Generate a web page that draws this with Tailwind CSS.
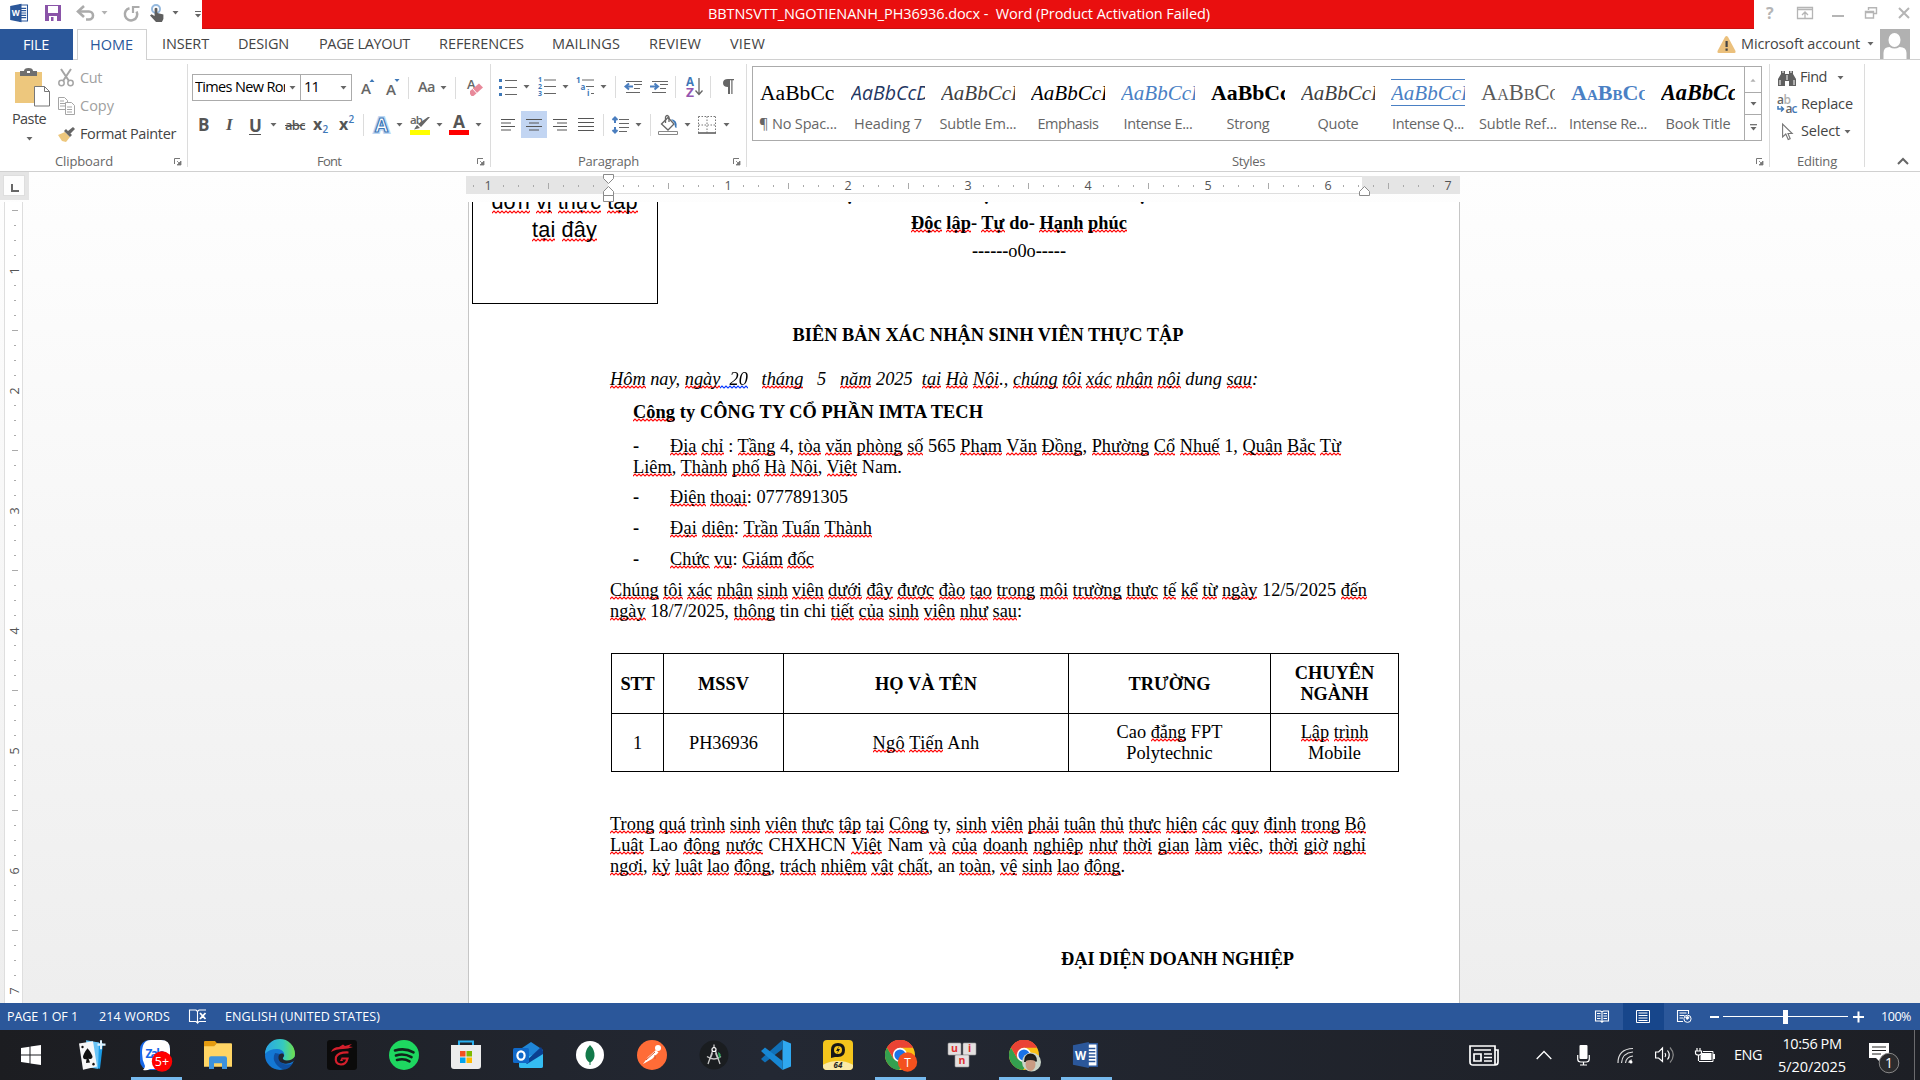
<!DOCTYPE html>
<html lang="en">
<head>
<meta charset="utf-8">
<title>BBTNSVTT_NGOTIENANH_PH36936.docx - Word</title>
<script src="https://cdn.jsdelivr.net/npm/@tailwindcss/browser@4"></script>
</head>
<body class="w-[1920px] h-[1080px] overflow-hidden bg-white flex flex-col font-['Open_Sans','Noto_Sans',sans-serif] text-[14.5px] leading-none text-[#444] [&_svg]:shrink-0 [&_svg]:block [&_svg]:overflow-visible [&_[data-w]]:whitespace-pre [&_[data-w]]:shrink-0">

<svg class="absolute w-0 h-0" aria-hidden="true">
  <defs>
    <symbol id="arr" viewBox="0 0 7 4"><path d="M.5 0h6L3.5 3.4z" fill="#666"/></symbol>
    <symbol id="launch" viewBox="0 0 8 8"><path d="M.5 6V.5H6" fill="none" stroke="#777"/><path d="M3 3l3 3M7 3v4H3z" fill="#777" stroke="#777" stroke-width=".8"/></symbol>
    <symbol id="word" viewBox="0 0 30 30"><path d="M15 3h12v24H15z" fill="#fff" stroke="#2b579a" stroke-width="1.6"/><path d="M17 8h8M17 11.500h8M17 15h8M17 18.500h8M17 22h8" stroke="#2b579a" stroke-width="1.7"/><path d="M1 4.500L18 1v28L1 25.500z" fill="#2b579a"/><text x="9.300" y="20" text-anchor="middle" font-size="14" font-weight="700" fill="#fff" font-family="Open Sans, sans-serif" textLength="12" lengthAdjust="spacingAndGlyphs">W</text></symbol>
    <symbol id="chrome" viewBox="0 0 30 30"><circle cx="15" cy="15" r="15" fill="#fbc116"/><path d="M15 15L2 7.500A15 15 0 0 1 28 7.500H15z" fill="#ea4335"/><path d="M2 7.500A15 15 0 0 0 14 30L21.500 18.800L15 15L8.500 18.800z" fill="#34a04f"/><path d="M15 7.500h13A15 15 0 0 0 2 7.500L8.500 18.800L15 15z" fill="#ea4335"/><circle cx="15" cy="15" r="7.200" fill="#fff"/><circle cx="15" cy="15" r="5.600" fill="#1a73e8"/></symbol>
  </defs>
</svg>

<!-- Title bar -->
<header class="h-[29px] flex items-start shrink-0">
  <div class="w-[202px] h-[26px] flex items-center">
    <svg class="ml-[9px]" width="21" height="20" viewBox="0 0 30 30"><use href="#word"/></svg>
    <svg class="ml-[15px]" width="16" height="16" viewBox="0 0 16 16"><path d="M0 0h16v16H0z" fill="#8a54a8"/><path d="M3 1h10v7H3zM4 11h8v5H4z" fill="#fff"/><path d="M6 12h2.500v4H6z" fill="#8a54a8"/></svg>
    <svg class="ml-[16px]" width="18" height="15" viewBox="0 0 18 15"><path d="M2 5.500h10a4 4 0 0 1 0 8H9" fill="none" stroke="#ababab" stroke-width="2.600"/><path d="M7 0L1 5.500L7 11" fill="none" stroke="#ababab" stroke-width="2.600"/></svg>
    <svg class="ml-[6px] opacity-50" width="7" height="4"><use href="#arr"/></svg>
    <svg class="ml-[15px]" width="17" height="17" viewBox="0 0 17 17"><path d="M6.500 3.200A6.200 6.200 0 1 0 13.600 6.500" fill="none" stroke="#ababab" stroke-width="2.500"/><path d="M10 8V2H16.500" fill="none" stroke="#ababab" stroke-width="2.200"/></svg>
    <svg class="ml-[10px]" width="15" height="18" viewBox="0 0 15 18"><circle cx="6" cy="5" r="4" fill="none" stroke="#94b8dd" stroke-width="2"/><path d="M4.600 4.500q1.400-1.500 2.800 0V9l6 1.500V15l-1.500 3H6L0 11.500l1.500-1.200L4.600 12z" fill="#5f5f5f"/></svg>
    <svg class="ml-[7px]" width="7" height="4"><use href="#arr"/></svg>
    <svg class="ml-[16px] mt-[2px]" width="6" height="7" viewBox="0 0 6 7"><path d="M0 .5h6" stroke="#666"/><path d="M0 3h6L3 6.500z" fill="#666"/></svg>
  </div>
  <div class="w-[1552px] h-[29px] bg-[#e90f0f] border-b border-[#c91212] flex items-center justify-center pr-[38px] pt-px text-white"><span data-w="502">BBTNSVTT_NGOTIENANH_PH36936.docx -  Word (Product Activation Failed)</span></div>
  <div class="flex-1 h-[26px] flex items-center">
    <span class="ml-[12px] w-[9px] text-[16px] font-bold text-[#b5b5b5]">?</span>
    <svg class="ml-[22px]" width="16" height="12" viewBox="0 0 16 12"><path d="M.5.500h15v11H.5zM.5 2.500h15M8 11V5M5 8l3-3l3 3" fill="none" stroke="#b5b5b5" stroke-width="1.300"/></svg>
    <svg class="ml-[19px]" width="12" height="12"><path d="M0 8h12v2H0z" fill="#b5b5b5"/></svg>
    <svg class="ml-[21px]" width="12" height="12" viewBox="0 0 12 12"><path d="M3.500 3V.8h8v5.700H9M.5 4.500h8v6.500h-8zM.5 5.500h8" fill="none" stroke="#b5b5b5" stroke-width="1.400"/></svg>
    <svg class="ml-[21px]" width="12" height="12" viewBox="0 0 12 12"><path d="M1 1l10 10M11 1L1 11" stroke="#b5b5b5" stroke-width="2"/></svg>
  </div>
</header>

<!-- Ribbon tabs -->
<nav class="h-[31px] flex items-stretch shrink-0 border-b border-[#d0d0d0] text-[14.500px] [&>span]:self-center [&>span]:pt-px">
  <div class="w-[73px] h-[31px] bg-[#2a579a] text-white flex items-center justify-center pt-px pr-[1px]"><span data-w="26">FILE</span></div>
  <div class="ml-[4px] w-[70px] h-[31px] bg-white border border-b-0 border-[#d0d0d0] text-[#2a579a] flex items-center justify-center pr-[1px]"><span data-w="43">HOME</span></div>
  <span class="ml-[15px]" data-w="47">INSERT</span>
  <span class="ml-[29px]" data-w="51">DESIGN</span>
  <span class="ml-[30px]" data-w="91">PAGE LAYOUT</span>
  <span class="ml-[29px]" data-w="85">REFERENCES</span>
  <span class="ml-[28px]" data-w="68">MAILINGS</span>
  <span class="ml-[29px]" data-w="52">REVIEW</span>
  <span class="ml-[29px]" data-w="35">VIEW</span>
  <div class="ml-auto mr-[10px] flex items-center">
    <svg width="19" height="17" viewBox="0 0 19 17"><path d="M8 1q1.500-2 3 0l7.500 14q.5 2-1 2h-16q-1.500 0-1-2z" fill="#ebc07c"/><path d="M8.500 5h2.200v6H8.500zM8.500 12.500h2.200v2.200H8.500z" fill="#444"/></svg>
    <span class="ml-[5px]" data-w="119">Microsoft account</span>
    <svg class="ml-[7px]" width="7" height="4"><use href="#arr"/></svg>
    <svg class="ml-[6px]" width="30" height="30" viewBox="0 0 30 30"><path d="M0 0h30v30H0z" fill="#b1b1b1"/><ellipse cx="14.500" cy="11" rx="6" ry="7" fill="#fff"/><path d="M3.500 30v-6q0-6 6-6q5 3 10 0q7 0 7 6v6z" fill="#fff"/></svg>
  </div>
</nav>

<!-- Ribbon -->
<section class="h-[112px] flex shrink-0 border-b border-[#d0d0d0] text-[14.500px]">

  <!-- Clipboard -->
  <div class="w-[187px] flex flex-col">
    <div class="flex h-[93px]">
      <div class="w-[58px] flex flex-col items-center pt-[8px]">
        <svg class="ml-[6px]" width="35" height="39" viewBox="0 0 35 39"><path d="M0 4h27v31H0z" fill="#edc77d"/><path d="M5 8V3h4q0-3 4.500-3T18 3h4v5z" fill="#6f6f6f"/><path d="M12 3h3v2h-3z" fill="#fff"/><path d="M19.500 18.500h10l5 5V38h-15z" fill="#fff" stroke="#777" /><path d="M29.500 18.500v5h5" fill="none" stroke="#777"/></svg>
        <span class="mt-[5px]" data-w="34">Paste</span>
        <svg class="mt-[10px]" width="7" height="4"><use href="#arr"/></svg>
      </div>
      <div class="pt-[4px] flex flex-col [&>div]:h-[28px] [&>div]:flex [&>div]:items-center [&>div]:gap-[5px]">
        <div class="text-[#a0a0a0]"><svg width="17" height="18" viewBox="0 0 17 18"><g fill="none" stroke="#a5a5a5" stroke-width="1.500"><circle cx="3.500" cy="14" r="2.700"/><circle cx="12.500" cy="14" r="2.700"/><path d="M5 12L13 0M11 12L3 0" stroke-width="2"/></g></svg><span data-w="22">Cut</span></div>
        <div class="text-[#a0a0a0]"><svg width="17" height="18" viewBox="0 0 17 18"><g fill="#fff" stroke="#a5a5a5"><path d="M.5.500h6l3 3v9h-9zM2 4h4M2 6.500h5M2 9h5"/><path d="M7.500 5.500h6l3 3v9h-9zM9 10h5M9 12.500h5M9 15h5"/></g></svg><span data-w="34">Copy</span></div>
        <div class="text-[#444]"><svg width="17" height="15" viewBox="0 0 17 15"><path d="M0 8l7-3l5 5l-4 5l-4-1z" fill="#edc77d"/><path d="M6 4l2-2l6 6l-2 2zM10 4l5-4l2 2l-5 5z" fill="#666"/></svg><span data-w="96">Format Painter</span></div>
      </div>
    </div>
    <div class="flex h-[17px] items-center pl-[55px] text-[13px] text-[#666]"><span data-w="58">Clipboard</span><svg class="ml-auto mr-[5px]" width="8" height="8"><use href="#launch"/></svg></div>
  </div>
  <div class="w-px h-[103px] mt-[4px] bg-[#dcdcdc]"></div>

  <!-- Font -->
  <div class="w-[302px] flex flex-col">
    <div class="flex items-center mt-[14px] ml-[4px] h-[27px]">
      <div class="w-[109px] h-[27px] border border-[#ababab] flex items-center pl-[2px] text-black"><div class="w-[90px] overflow-hidden py-1"><span data-w="96" class="inline-block">Times New Ron</span></div><svg class="ml-[4px]" width="7" height="4"><use href="#arr"/></svg></div>
      <div class="-ml-px w-[52px] h-[27px] border border-[#ababab] flex items-center pl-[3px] text-black"><span data-w="15">11</span><svg class="ml-auto mr-[4px]" width="7" height="4"><use href="#arr"/></svg></div>
      <svg class="ml-[9px]" width="14" height="18" viewBox="0 0 14 18"><text x="0" y="15" font-size="15" font-weight="600" fill="#666" textLength="10" lengthAdjust="spacingAndGlyphs">A</text><path d="M8.500 3L11 0l2.500 3z" fill="#3e78b8"/></svg>
      <svg class="ml-[11px]" width="14" height="18" viewBox="0 0 14 18"><text x="0" y="16" font-size="14" font-weight="600" fill="#666" textLength="10" lengthAdjust="spacingAndGlyphs">A</text><path d="M8.500 0L11 3l2.500-3z" fill="#3e78b8"/></svg>
      <div class="ml-[8px] w-px h-[22px] bg-[#dcdcdc]"></div>
      <span class="ml-[9px] font-semibold text-[#666]" data-w="17">Aa</span>
      <svg class="ml-[5px]" width="7" height="4"><use href="#arr"/></svg>
      <div class="ml-[8px] w-px h-[22px] bg-[#dcdcdc]"></div>
      <svg class="ml-[11px]" width="16" height="19" viewBox="0 0 16 19"><text x="0" y="10.500" font-size="13" font-weight="600" fill="#666" textLength="9">A</text><path d="M3 13l9-7.500l4 4L6.500 18h-2L3 16z" fill="#e8899a"/><path d="M5.500 10.500l4.500 5" stroke="#fff"/></svg>
    </div>
    <div class="flex items-center mt-[10px] ml-[10px] h-[27px] text-[#555] text-[17px] [&>span]:leading-[20px]">
      <span class="font-bold" data-w="10">B</span>
      <span class="ml-[18px] w-[10px] font-bold italic font-['Liberation_Serif',serif]">I</span>
      <span class="ml-[13px] font-bold border-b border-[#555] !leading-[17px] mt-[2px]" data-w="12">U</span>
      <svg class="ml-[9px]" width="7" height="4"><use href="#arr"/></svg>
      <span class="ml-[8px] line-through text-[13px] font-semibold" data-w="20">abc</span>
      <svg class="ml-[8px]" width="16" height="20" viewBox="0 0 16 20"><text y="15" font-size="16" font-weight="700" fill="#555">x</text><text x="9.500" y="18" font-size="10" font-weight="600" fill="#3e78b8">2</text></svg>
      <svg class="ml-[10px]" width="16" height="20" viewBox="0 0 16 20"><text y="15" font-size="16" font-weight="700" fill="#555">x</text><text x="9.500" y="8" font-size="10" font-weight="600" fill="#3e78b8">2</text></svg>
      <div class="ml-[8px] w-px h-[22px] bg-[#dcdcdc]"></div>
      <svg class="ml-[9px]" width="18" height="20" viewBox="0 0 18 20"><text x="2" y="17" font-size="19" font-weight="700" fill="#fff" stroke="#bcd6f2" stroke-width="4" textLength="13" lengthAdjust="spacingAndGlyphs">A</text><text x="2" y="17" font-size="19" font-weight="700" fill="#fff" stroke="#3e78b8" stroke-width="1.200" textLength="13" lengthAdjust="spacingAndGlyphs">A</text></svg>
      <svg class="ml-[5px]" width="7" height="4"><use href="#arr"/></svg>
      <svg class="ml-[7px]" width="20" height="20" viewBox="0 0 20 20"><path d="M0 15h20v5H0z" fill="#ff0"/><text y="8.500" font-size="11.500" font-weight="600" fill="#666" textLength="13">ab</text><path d="M18 2l2 0L11 12l-3-3zM7 10l3 3l-6 1.500z" fill="#666"/></svg>
      <svg class="ml-[6px]" width="7" height="4"><use href="#arr"/></svg>
      <svg class="ml-[6px]" width="20" height="20" viewBox="0 0 20 20"><path d="M0 15h20v5H0z" fill="#f00"/><text x="4" y="13" font-size="17" font-weight="700" fill="#555" textLength="12" lengthAdjust="spacingAndGlyphs">A</text></svg>
      <svg class="ml-[6px]" width="7" height="4"><use href="#arr"/></svg>
    </div>
    <div class="mt-[15px] flex h-[17px] items-center pl-[129px] text-[13px] text-[#666]"><span data-w="24">Font</span><svg class="ml-auto mr-[5px]" width="8" height="8"><use href="#launch"/></svg></div>
  </div>
  <div class="w-px h-[103px] mt-[4px] bg-[#dcdcdc]"></div>

  <!-- Paragraph -->
  <div class="w-[255px] flex flex-col">
    <div class="flex items-center mt-[13px] ml-[8px] h-[27px]">
      <svg width="18" height="18" viewBox="0 0 18 18"><path d="M6 2.500h12M6 9.500h12M6 16.500h12" stroke="#666" /><path d="M0 1h3v3H0zM0 8h3v3H0zM0 15h3v3H0z" fill="#3e78b8"/></svg>
      <svg class="ml-[6px]" width="7" height="4"><use href="#arr"/></svg>
      <svg class="ml-[8px]" width="18" height="19" viewBox="0 0 18 19"><path d="M6 3h12M6 9.500h12M6 16.500h12" stroke="#666"/><g font-size="7" font-weight="700" fill="#3e78b8"><text y="5">1</text><text y="12">2</text><text y="19">3</text></g></svg>
      <svg class="ml-[6px]" width="7" height="4"><use href="#arr"/></svg>
      <svg class="ml-[7px]" width="19" height="19" viewBox="0 0 19 19"><path d="M6 3h12M10 9.500h8M15 16.500h3" stroke="#666"/><g font-size="8" font-weight="700" fill="#3e78b8"><text y="5.500">1</text><text x="4.500" y="12.500">a</text><text x="11" y="19">i</text></g></svg>
      <svg class="ml-[5px]" width="7" height="4"><use href="#arr"/></svg>
      <div class="ml-[8px] w-px h-[22px] bg-[#dcdcdc]"></div>
      <svg class="ml-[8px]" width="18" height="12" viewBox="0 0 18 12"><path d="M2 .5h16M10 3.500h8M10 7.500h6M2 11.500h14" stroke="#666"/><path d="M9 5.500H2M5 2.500L1.500 5.500L5 8.500" fill="none" stroke="#4a7ebf" stroke-width="2"/></svg>
      <svg class="ml-[8px]" width="18" height="12" viewBox="0 0 18 12"><path d="M2 .5h16M10 3.500h8M10 7.500h6M2 11.500h14" stroke="#666"/><path d="M0 5.500h7M4.500 2.500L8 5.500L4.500 8.500" fill="none" stroke="#4a7ebf" stroke-width="2"/></svg>
      <div class="ml-[7px] w-px h-[22px] bg-[#dcdcdc]"></div>
      <svg class="ml-[10px]" width="17" height="20" viewBox="0 0 17 20"><text y="9" font-size="12" font-weight="700" fill="#3e78b8" textLength="8" lengthAdjust="spacingAndGlyphs">A</text><text y="19.500" font-size="12" font-weight="700" fill="#9456b0" textLength="8" lengthAdjust="spacingAndGlyphs">Z</text><path d="M13 1v16M9.500 13.500L13 17.500l3.500-4" fill="none" stroke="#666" stroke-width="1.300"/></svg>
      <div class="ml-[7px] w-px h-[22px] bg-[#dcdcdc]"></div>
      <svg class="ml-[12px]" width="11" height="15" viewBox="0 0 11 15"><path d="M6 0v15H5V8Q0 8 0 4T5 0h6v1.200H9.500V15H8.300V1.200H7V15H6z" fill="#666"/></svg>
    </div>
    <div class="flex items-center mt-[11px] ml-[10px] h-[27px]">
      <svg width="14" height="12" viewBox="0 0 14 12"><path d="M0 .5h14M0 4h10M0 7.500h14M0 11h10" stroke="#555"/></svg>
      <div class="ml-[6px] w-[26px] h-[27px] bg-[#c2d5f2] flex items-center justify-center"><svg width="16" height="12" viewBox="0 0 16 12"><path d="M0 .5h16M3 4h10M0 7.500h16M3 11h10" stroke="#555"/></svg></div>
      <svg class="ml-[6px]" width="14" height="12" viewBox="0 0 14 12"><path d="M0 .5h14M4 4h10M0 7.500h14M4 11h10" stroke="#555"/></svg>
      <svg class="ml-[11px]" width="16" height="13" viewBox="0 0 16 13"><path d="M0 .5h16M0 4.500h16M0 8.500h16M0 12.500h16" stroke="#555"/></svg>
      <div class="ml-[9px] w-px h-[22px] bg-[#dcdcdc]"></div>
      <svg class="ml-[8px]" width="17" height="18" viewBox="0 0 17 18"><path d="M7 3.500h10M7 7.500h10M7 11.500h10M7 15.500h8" stroke="#666"/><path d="M3 2v5M3 11v5M.5 4L3 1.500L5.500 4M.5 14L3 16.500L5.500 14" fill="none" stroke="#4a7ebf" stroke-width="2"/></svg>
      <svg class="ml-[6px]" width="7" height="4"><use href="#arr"/></svg>
      <div class="ml-[8px] w-px h-[22px] bg-[#dcdcdc]"></div>
      <svg class="ml-[7px]" width="20" height="20" viewBox="0 0 20 20"><path d="M.5 16.500h19v3H.5z" fill="#fff" stroke="#888"/><path d="M3.500 9L10 2.500L16 9l-6 6z" fill="#fff" stroke="#666" stroke-width="1.300"/><path d="M7.500 8V2q1.500-3 3.500 0v5" fill="none" stroke="#666" stroke-width="1.300"/><path d="M13 4q7 1 5.500 9q-2 0-2-5z" fill="#3e78b8"/></svg>
      <svg class="ml-[6px]" width="7" height="4"><use href="#arr"/></svg>
      <svg class="ml-[7px]" width="18" height="18" viewBox="0 0 18 18"><path d="M.5.500h17M.5 9h17M.5.500v16M9 .5v16M17.500.500v16" stroke="#777" stroke-dasharray="1.500 1.500"/><path d="M0 17h18" stroke="#555" stroke-width="1.500"/></svg>
      <svg class="ml-[7px]" width="7" height="4"><use href="#arr"/></svg>
    </div>
    <div class="mt-[15px] flex h-[17px] items-center pl-[87px] text-[13px] text-[#666]"><span data-w="61">Paragraph</span><svg class="ml-auto mr-[5px]" width="8" height="8"><use href="#launch"/></svg></div>
  </div>
  <div class="w-px h-[103px] mt-[4px] bg-[#dcdcdc]"></div>

  <!-- Styles gallery -->
  <div class="w-[1022px] flex flex-col">
    <div class="mt-[6px] ml-[5px] w-[1010px] h-[75px] border border-[#ababab] flex">
      <div class="w-[991px] flex text-[#666] [&>div]:w-[90px] [&>div]:flex [&>div]:flex-col [&>div]:items-center [&>div>p]:w-[74px] [&>div>p]:h-[27px] [&>div>p]:mt-[12px] [&>div>p]:mb-[11px] [&>div>p]:overflow-hidden [&>div>p]:whitespace-nowrap [&>div>p]:text-[21px] [&>div>p]:leading-[28px] [&>div>p]:font-['Liberation_Serif',serif]">
        <div><p class="text-black !text-[21.600px] -translate-x-px">AaBbCc</p><span data-w="78">¶ No Spac...</span></div>
        <div><p class="italic text-[#1f3763] !text-[19.500px] !font-['Open_Sans',sans-serif]">AaBbCcD</p><span data-w="68">Heading 7</span></div>
        <div><p class="italic text-[#404040]">AaBbCcDd</p><span data-w="77">Subtle Em...</span></div>
        <div><p class="italic text-black">AaBbCcDd</p><span data-w="61">Emphasis</span></div>
        <div><p class="italic text-[#4a80c4]">AaBbCcDd</p><span data-w="69">Intense E...</span></div>
        <div><p class="font-bold text-black !text-[21.800px]">AaBbCc</p><span data-w="43">Strong</span></div>
        <div><p class="italic text-[#404040]">AaBbCcDd</p><span data-w="41">Quote</span></div>
        <div><p class="italic text-[#4a80c4] border-y border-[#4a80c4] !leading-[26px]">AaBbCcDd</p><span data-w="72">Intense Q...</span></div>
        <div><p class="[font-variant:small-caps] text-[#5a5a5a] !text-[22.500px]">AaBbCcDd</p><span data-w="78">Subtle Ref...</span></div>
        <div><p class="[font-variant:small-caps] font-bold text-[#4a80c4] !text-[22px]">AaBbCcDd</p><span data-w="78">Intense Re...</span></div>
        <div><p class="italic font-bold text-black !text-[22.300px]">AaBbCcDd</p><span data-w="65">Book Title</span></div>
      </div>
      <div class="flex-1 border-l border-[#ababab] flex flex-col [&>div]:flex [&>div]:items-center [&>div]:justify-center">
        <div class="h-[25px]"><svg class="rotate-180 opacity-50" width="6" height="4"><use href="#arr"/></svg></div>
        <div class="h-[23px] border-y border-[#ababab]"><svg width="7" height="4"><use href="#arr"/></svg></div>
        <div class="h-[25px]"><svg width="7" height="7" viewBox="0 0 7 7"><path d="M0 .7h7" stroke="#666" stroke-width="1.200"/><path d="M.5 3h6L3.500 6.500z" fill="#666"/></svg></div>
      </div>
    </div>
    <div class="mt-[12px] flex h-[17px] items-center pl-[485px] text-[13px] text-[#666]"><span data-w="33">Styles</span><svg class="ml-auto mr-[5px]" width="8" height="8"><use href="#launch"/></svg></div>
  </div>
  <div class="w-px h-[103px] mt-[4px] bg-[#dcdcdc]"></div>

  <!-- Editing -->
  <div class="w-[94px] flex flex-col pl-[8px] pt-[4px] [&>div]:h-[27px] [&>div]:flex [&>div]:items-center">
    <div><svg width="18" height="16" viewBox="0 0 18 16"><path d="M3 1h4v3h4V1h4v3l3 5v7h-7v-5H7v5H0V9l3-5z" fill="#606060"/><path d="M2 10v5M16 10v5M9 5v5M4 2h2M12 2h2" stroke="#fff"/></svg><span class="ml-[4px]" data-w="27">Find</span><svg class="ml-[10px]" width="7" height="4"><use href="#arr"/></svg></div>
    <div><svg class="-ml-[1px]" width="20" height="18" viewBox="0 0 20 18"><g font-size="12" font-weight="600"><text x="0" y="8" fill="#666">a</text><text x="6.500" y="8" fill="#b0b0b0">b</text><text x="8.500" y="17" fill="#666">a</text><text x="14.500" y="17" fill="#3e78b8">c</text></g><path d="M1 10v3h5M4 10.500l2.500 2.500L4 15.500" fill="none" stroke="#3e78b8" stroke-width="1.500"/></svg><span class="ml-[4px]" data-w="52">Replace</span></div>
    <div><svg class="ml-[4px]" width="11" height="18" viewBox="0 0 11 18"><path d="M.6 1v13l3.200-3l2.400 5.500l2-.8L6 10.500h4.200z" fill="#fff" stroke="#777" stroke-width="1.100"/></svg><span class="ml-[8px]" data-w="39">Select</span><svg class="ml-[4px]" width="7" height="4"><use href="#arr"/></svg></div>
    <div class="mt-[8px] !h-[17px] pl-[19px] text-[13px] text-[#666]"><span data-w="40">Editing</span></div>
  </div>
  <div class="w-px h-[103px] mt-[4px] bg-[#dcdcdc]"></div>
  <div class="ml-auto mr-[11px] mt-[97px]"><svg width="12" height="8" viewBox="0 0 12 8"><path d="M1 7l5-5l5 5" fill="none" stroke="#666" stroke-width="2"/></svg></div>
</section>

<!-- Work area -->
<main class="h-[831px] shrink-0 flex flex-col bg-linear-to-b from-[#fefefe] to-[#eeeeee] overflow-hidden">
  <div class="h-[30px] flex shrink-0 relative z-10">
    <div class="w-[29px] h-[28px] bg-[#e5e5e5] pt-[3px] pl-[3px]"><div class="w-[22px] h-[21px] bg-[#fdfdfd] border border-[#dedede] pt-[8px] pl-[7px]"><div class="w-[8px] h-[8px] border-l-2 border-b-2 border-[#666]"></div></div></div>
    <svg class="ml-[437px]" width="994" height="30" viewBox="466 172 994 30" id="hruler"><path d="M466 176h994v18H466z" fill="#e5e5e5"/><path d="M608 177h754v16H608z" fill="#fff"/><path d="M608 176.500h754M608 193.500h754" stroke="#dedede"/></svg>
  </div>
  <div class="flex-1 flex min-h-0">
    <svg class="ml-[4px]" width="19" height="801" viewBox="4 202 19 801" id="vruler"><path d="M4.500 202h18v801h-18z" fill="#fff"/><path d="M4.500 202v801M22.500 202v801" stroke="#dedede"/></svg>

    <!-- Document page -->
    <article class="relative ml-[445px] w-[992px] h-[801px] bg-white border-x border-[#c6c6c6] overflow-hidden flex flex-col pl-[141px] text-black font-['Liberation_Serif','Times_New_Roman',serif] text-[18.33px] leading-[21px] [&_u]:no-underline [&_u]:bg-[url(data:image/svg+xml,%3Csvg%20xmlns=%22http://www.w3.org/2000/svg%22%20width=%224%22%20height=%224%22%3E%3Cpath%20d=%22M-2%201L0%203L2%201L4%203L6%201%22%20fill=%22none%22%20stroke=%22red%22%20stroke-width=%221.2%22/%3E%3C/svg%3E)] [&_u]:bg-repeat-x [&_u]:bg-bottom-left [&>p]:whitespace-pre [&>*]:shrink-0">
      <div class="absolute left-[3px] -top-[60px] w-[186px] h-[162px] border border-black text-center font-['Liberation_Sans',Arial,sans-serif] text-[21.67px] leading-[28px] pt-[45px] pr-[1px]">
        <p><span data-w="146" class="inline-block"><u>đơn</u> <u>vị</u> <u>thực</u> <u>tập</u></span></p>
        <p><span data-w="65" class="inline-block"><u>tại</u> <u>đây</u></span></p>
      </div>
      <p class="-mt-[18px] w-[818px] text-center font-bold">CỘNG HÒA XÃ HỘI CHỦ NGHĨA VIỆT NAM</p>
      <p class="mt-[8px] w-[818px] text-center font-bold"><span data-w="216"><u>Độc</u> <u>lập</u>- <u>Tự</u> do- <u>Hạnh</u> <u>phúc</u></span></p>
      <p class="mt-[7px] w-[818px] text-center"><span data-w="94"><b>------</b>o0o<b>-----</b></span></p>
      <p class="mt-[63px] w-[756px] text-center font-bold"><span data-w="391">BIÊN BẢN XÁC NHẬN SINH VIÊN THỰC TẬP</span></p>
      <p class="mt-[23px] italic"><span data-w="648"><u>Hôm</u> nay, <u>ngày</u><u class="hue-rotate-[240deg]">  20</u>   <u>tháng</u>   5   <u>năm</u> 2025  <u>tại</u> <u>Hà</u> <u>Nội</u>., <u>chúng</u> <u>tôi</u> <u>xác</u> <u>nhận</u> <u>nội</u> dung <u>sau</u>:</span></p>
      <p class="mt-[12px] pl-[23px] font-bold"><span data-w="350"><u>Công</u> ty CÔNG TY CỔ PHẦN IMTA TECH</span></p>
      <p class="mt-[13px] pl-[23px] flex"><b class="w-[37px]">-</b><span data-w="671"><u>Địa</u> <u>chỉ</u> : <u>Tầng</u> 4, <u>tòa</u> <u>văn</u> <u>phòng</u> <u>số</u> 565 <u>Phạm</u> <u>Văn</u> <u>Đồng</u>, <u>Phường</u> <u>Cổ</u> <u>Nhuế</u> 1, <u>Quận</u> <u>Bắc</u> <u>Từ</u></span></p>
      <p class="pl-[23px]"><span data-w="269"><u>Liêm</u>, <u>Thành</u> <u>phố</u> <u>Hà</u> <u>Nội</u>, <u>Việt</u> Nam.</span></p>
      <p class="mt-[9px] pl-[23px] flex"><b class="w-[37px]">-</b><span data-w="178"><u>Điện</u> <u>thoại</u>: 0777891305</span></p>
      <p class="mt-[10px] pl-[23px] flex"><b class="w-[37px]">-</b><span data-w="202"><u>Đại</u> <u>diện</u>: <u>Trần</u> <u>Tuấn</u> <u>Thành</u></span></p>
      <p class="mt-[10px] pl-[23px] flex"><b class="w-[37px]">-</b><span data-w="144"><u>Chức</u> <u>vụ</u>: <u>Giám</u> <u>đốc</u></span></p>
      <p class="mt-[10px]"><span data-w="757"><u>Chúng</u> <u>tôi</u> <u>xác</u> <u>nhận</u> <u>sinh</u> <u>viên</u> <u>dưới</u> <u>đây</u> <u>được</u> <u>đào</u> <u>tạo</u> <u>trong</u> <u>môi</u> <u>trường</u> <u>thực</u> <u>tế</u> <u>kể</u> <u>từ</u> <u>ngày</u> 12/5/2025 <u>đến</u></span></p>
      <p><span data-w="412"><u>ngày</u> 18/7/2025, <u>thông</u> tin chi <u>tiết</u> <u>của</u> <u>sinh</u> <u>viên</u> <u>như</u> <u>sau</u>:</span></p>

      <div class="mt-[31px] ml-[1px] w-[788px] h-[119px] border border-black grid grid-cols-[52px_120px_285px_202px_127px] grid-rows-[60px_57px] text-center [&>div]:flex [&>div]:items-center [&>div]:justify-center [&>div]:border-black [&>div]:border-r [&>div:nth-child(5n)]:border-r-0 [&>div:nth-child(-n+5)]:border-b [&>div:nth-child(-n+5)]:font-bold [&>div]:pt-[2px]">
        <div><span data-w="34">STT</span></div><div><span data-w="51">MSSV</span></div><div><span data-w="102">HỌ VÀ TÊN</span></div><div><span data-w="82">TRƯỜNG</span></div><div class="!pt-0">CHUYÊN<br>NGÀNH</div>
        <div>1</div><div><span data-w="69">PH36936</span></div><div><span data-w="107"><u>Ngô</u> <u>Tiến</u> Anh</span></div><div class="!pt-0"><span>Cao <u>đẳng</u> FPT<br>Polytechnic</span></div><div class="!pt-0"><span><u>Lập</u> <u>trình</u><br>Mobile</span></div>
      </div>

      <p class="mt-[42px]"><span data-w="756"><u>Trong</u> <u>quá</u> <u>trình</u> <u>sinh</u> <u>viên</u> <u>thực</u> <u>tập</u> <u>tại</u> <u>Công</u> ty, <u>sinh</u> <u>viên</u> <u>phải</u> <u>tuân</u> <u>thủ</u> <u>thực</u> <u>hiện</u> <u>các</u> <u>quy</u> <u>định</u> <u>trong</u> <u>Bộ</u></span></p>
      <p class="w-[756px] !whitespace-normal text-justify [text-align-last:justify]"><u>Luật</u> Lao <u>động</u> <u>nước</u> CHXHCN <u>Việt</u> Nam <u>và</u> <u>của</u> <u>doanh</u> <u>nghiệp</u> <u>như</u> <u>thời</u> <u>gian</u> <u>làm</u> <u>việc</u>, <u>thời</u> <u>giờ</u> <u>nghỉ</u></p>
      <p><span data-w="515"><u>ngơi</u>, <u>kỷ</u> <u>luật</u> <u>lao</u> <u>động</u>, <u>trách</u> <u>nhiệm</u> <u>vật</u> <u>chất</u>, an <u>toàn</u>, <u>vệ</u> <u>sinh</u> <u>lao</u> <u>động</u>.</span></p>
      <p class="mt-[72px] pl-[451px] font-bold"><span data-w="233">ĐẠI DIỆN DOANH NGHIỆP</span></p>
    </article>
  </div>
</main>

<!-- Status bar -->
<footer class="h-[27px] shrink-0 bg-[#2b579a] text-white text-[12.500px] flex items-center [&_span]:pt-px">
  <span class="ml-[7px]" data-w="71">PAGE 1 OF 1</span>
  <span class="ml-[21px]" data-w="71">214 WORDS</span>
  <svg class="ml-[19px]" width="18" height="15" viewBox="0 0 18 15"><path d="M8.500 2.500V14L7 12.500H.5V1H7l1.500 1.500L10 1h7M10 12.500h7M8.500 14l1.500-1.500" fill="none" stroke="#fff" stroke-width="1.100"/><path d="M11 4l5.500 6M16.500 4L11 10" stroke="#fff" stroke-width="1.800"/></svg>
  <span class="ml-[18px]" data-w="155">ENGLISH (UNITED STATES)</span>
  <div class="ml-auto h-full flex items-center">
    <svg width="14" height="13" viewBox="0 0 14 13"><path d="M.5 1h5L7 2l1.500-1h5v10h-5L7 12l-1.500-1h-5zM7 2v11M2 3.500h3.500M2 6h3.500M2 8.500h3.500M8.500 3.500H12M8.500 6H12M8.500 8.500H12" fill="none" stroke="#fff" stroke-width="1.100"/></svg>
    <div class="ml-[14px] w-[41px] h-full bg-[#17468b] flex items-center justify-center pr-px"><svg width="14" height="13" viewBox="0 0 14 13"><path d="M.5.500h13v12H.5zM2.500 3h9M2.500 5.500h9M2.500 8h9M2.500 10.500h9" fill="none" stroke="#fff"/></svg></div>
    <svg class="ml-[13px]" width="15" height="13" viewBox="0 0 15 13"><path d="M6 11.500H.5V.5h11V4M2.500 3h7M2.500 5.500h5M2.500 8H6" fill="none" stroke="#fff" stroke-width="1.100"/><circle cx="10.500" cy="8.800" r="3.600" fill="none" stroke="#fff"/><path d="M8 7l3-1l1.500 2L10 10z" fill="#fff"/></svg>
    <svg class="ml-[18px]" width="9" height="12"><path d="M0 5h9v2H0z" fill="#fff"/></svg>
    <div class="ml-[4px] w-[125px] h-[14px] flex items-center"><div class="w-[60px] h-px bg-white"></div><div class="w-[5px] h-[14px] bg-white"></div><div class="w-[60px] h-px bg-white"></div></div>
    <svg class="ml-[5px]" width="11" height="12"><path d="M0 5h11v2H0zM4.500.500h2v11h-2z" fill="#fff"/></svg>
    <span class="ml-[17px] mr-[9px]" data-w="30">100%</span>
  </div>
</footer>

<!-- Taskbar -->
<div class="h-[50px] shrink-0 bg-linear-to-r from-[#1c1d21] via-[#232833] via-40% to-[#1d1f25] flex text-white">
  <div class="flex h-full [&>div]:w-[62px] [&>div]:flex [&>div]:items-center [&>div]:justify-center [&>div]:relative">
    <div class="!w-[61px]"><svg width="20" height="20" viewBox="0 0 20 20"><path d="M0 3l8.500-1.300V9.500H0zM9.500 1.500L20 0v9.500H9.500zM0 10.500h8.500v7.800L0 17zM9.500 10.500H20V20L9.500 18.500z" fill="#fff"/></svg></div>
    <div class="!w-[64px]"><svg width="28" height="32" viewBox="0 0 28 28" preserveAspectRatio="none"><path d="M10 2l14 2l-3 22l-10-1z" fill="#1a9be6"/><path d="M7 1l13 2l-1 23l-9-1z" fill="#6ac4f5"/><path d="M0 4l14-2l4 22l-14 3z" fill="#f7f7f7"/><path d="M8.500 8q5 5 5 8q-1 2.500-4 1l1.500 3.500l-4 .5l.5-3.500q-3 1-3.500-1.500q0-3 4.500-8z" fill="#111"/><circle cx="3.500" cy="7" r="1.200" fill="#111"/><circle cx="14.500" cy="22" r="1.200" fill="#111"/><path d="M22 1v8M18.500 5h8" stroke="#dff3ff" stroke-width="2"/></svg></div>
    <div><svg width="34" height="34" viewBox="0 0 34 34"><rect x="1" y="2" width="30" height="30" rx="9" fill="#1767e8"/><path d="M12 2h10q9 0 9 9v10q0 10-9 10H11q-3 2-7 1q2-2 2-4Q3 22 3 15Q3 2 12 2z" fill="#fff"/><text x="6.500" y="20" font-size="12" font-weight="700" fill="#1767e8" textLength="20">Zalo</text><circle cx="23" cy="23.500" r="10.200" fill="#f00"/><text x="23" y="28" text-anchor="middle" font-size="12.500" fill="#fff">5+</text></svg><div class="absolute bottom-0 left-[6px] w-[51px] h-[3px] bg-[#76b9ed]"></div></div>
    <div><svg width="28" height="28" viewBox="0 0 28 24" preserveAspectRatio="none"><path d="M0 1q0-1 1-1h10l3 3h-2l-3 3H0z" fill="#e49b0f"/><path d="M0 4.500h10L13 2h14q1 0 1 1v19H0z" fill="#ffd565"/><path d="M5 24V15q0-2 2-2h14q2 0 2 2v9h-5v-5h-8v5z" fill="#3e92dc"/></svg></div>
    <div><svg width="30" height="30" viewBox="0 0 30 30"><defs><linearGradient id="eg" x1="0" x2="1"><stop offset="0" stop-color="#2aa5e6"/><stop offset=".6" stop-color="#35c9c0"/><stop offset="1" stop-color="#6fe04a"/></linearGradient></defs><circle cx="15" cy="15" r="15" fill="#1478d4"/><path d="M0 14A15 15 0 0 1 30 14q0 7-8 7q-5 0-4-3q2-2 1-5q-2-4-7-4Q4 9 0 14z" fill="url(#eg)"/><path d="M10 13q-3 6 1 11t9 5.500q5-1 8-6.500q-6 3-11 0q-4-3-2-9z" fill="#0f4fa0"/><path d="M16 13.500q-3 1-2.500 5t5.500 5q5 1 11-3v-4q-3 4-8 4q-5-.5-4-3q2-2 0-4z" fill="#20252f"/></svg></div>
    <div><svg width="30" height="30" viewBox="0 0 30 30"><rect width="30" height="30" rx="3" fill="#0b0b0b"/><path d="M4 12q2-5 8-5l4-2.500l2 1.500l7-2l-3 2.500l4 .5q-5 2-10 2Q9 9 4 12z" fill="#d51f2c"/><path d="M21.500 12.500q-10-.5-12.500 4.500q-1.500 7 5 7.500q5 0 6.500-6h-6" fill="none" stroke="#d51f2c" stroke-width="2.200"/><path d="M14.500 18l-1.500 3h3z" fill="#d51f2c"/></svg></div>
    <div><svg width="30" height="30" viewBox="0 0 30 30"><circle cx="15" cy="15" r="15" fill="#1ed760"/><path d="M6 10.500q10-3 18.500 1.800M7 15.500q8-2.500 15.500 1.700M8 20q7-2 12.500 1.300" fill="none" stroke="#10231a" stroke-width="2.600" stroke-linecap="round"/></svg></div>
    <div><svg width="30" height="30" viewBox="0 0 30 30"><path d="M8 6V1.500h14V6" fill="none" stroke="#29b0f0" stroke-width="2"/><path d="M0 5h30v21q0 3-3 3H3q-3 0-3-3z" fill="#ececec"/><path d="M9 11h5.500v5.500H9z" fill="#f25022"/><path d="M15.500 11H21v5.500h-5.500z" fill="#7fba00"/><path d="M9 17.500h5.500V23H9z" fill="#00a4ef"/><path d="M15.500 17.500H21V23h-5.500z" fill="#ffb900"/></svg></div>
    <div><svg width="30" height="30" viewBox="0 0 30 30"><path d="M6 10L18 2l12 8v16q0 2-2 2H8q-2 0-2-2z" fill="#1f86d8"/><path d="M6 20L30 11v15q0 2-2 2H8q-2 0-2-2z" fill="#35bdf2"/><path d="M12 22L28 7l2 4v3L14 24z" fill="#0b3f90"/><rect y="8" width="16" height="15" rx="1.500" fill="#1069c9"/><ellipse cx="8" cy="15.500" rx="3.600" ry="4.200" fill="none" stroke="#fff" stroke-width="2.200"/></svg></div>
    <div><svg width="28" height="28" viewBox="0 0 28 28"><circle cx="14" cy="14" r="14" fill="#fff"/><path d="M14 4q5 5 4.500 11q-.5 4-4 6.500V24h-1v-2.500q-3.500-2.500-4-6.500Q9 9 14 4z" fill="#12794a"/></svg></div>
    <div><svg width="30" height="30" viewBox="0 0 30 30"><circle cx="15" cy="15" r="15" fill="#ff6c37"/><circle cx="21" cy="8" r="3" fill="#fff"/><path d="M19 10l2.500 2.500L15 19l-9 5l5-7z" fill="#fff"/><path d="M9 20l9-8M18 15v4" stroke="#d9532a"/></svg></div>
    <div><svg width="30" height="30" viewBox="0 0 30 30"><circle cx="15" cy="15" r="14.500" fill="#1a1d20"/><path d="M15 4.500v4M13.500 11L9 24M16.500 11L21 24M13.500 13l-2 5M16.500 13l2 5M8 16.500q7 5 14 0" fill="none" stroke="#c8c8c8" stroke-width="1.300"/><circle cx="15" cy="9.500" r="2" fill="none" stroke="#fff" stroke-width="1.200"/><path d="M19 12q5 2 1 7z" fill="#2ea85a"/></svg></div>
    <div><svg width="30" height="30" viewBox="0 0 30 30"><path d="M21.500 0L30 3.500v23L21.500 30z" fill="#2fa8f0"/><path d="M21.500 0v9L4 22.500L0 19z" fill="#1070b8"/><path d="M21.500 30v-9L4 7.500L0 11z" fill="#1787d4"/></svg></div>
    <div><svg width="30" height="30" viewBox="0 0 30 30"><clipPath id="ld"><rect width="30" height="30" rx="4"/></clipPath><g clip-path="url(#ld)"><path d="M0 0h30v30H0z" fill="#f4c51c"/><ellipse cx="15" cy="31" rx="19" ry="10" fill="#fbe9a6"/><path d="M8 18V10q0-7 7-7t7 7t-7 7h-3z" fill="#171717"/><circle cx="15" cy="10" r="4" fill="#f4c51c"/><path d="M16 6l-3 5h2l-1 3l3-5h-2z" fill="#171717"/><text x="15" y="28" text-anchor="middle" font-size="8" font-weight="700" font-style="italic" fill="#222">64</text></g></svg></div>
    <div><svg width="34" height="34" viewBox="-2 -2 34 34"><use href="#chrome" width="30" height="30"/><circle cx="22.500" cy="22" r="9.700" fill="#f4511e"/><text x="22.500" y="26.500" text-anchor="middle" font-size="12" fill="#fff">T</text></svg><div class="absolute bottom-0 left-[6px] w-[51px] h-[3px] bg-[#76b9ed]"></div></div>
    <div><svg width="30" height="26" viewBox="0 0 30 26"><g fill="#e3e0e0" stroke="#999" stroke-width=".6"><rect x="1" y="1" width="13" height="12" rx="1"/><rect x="16" y="1" width="13" height="12" rx="1"/><rect x="8" y="13" width="14" height="12" rx="1"/></g><g font-size="10.500" font-weight="700" fill="#e03030" text-anchor="middle"><text x="7.500" y="10">u</text><text x="22.500" y="10">i</text><text x="15" y="22">n</text></g></svg></div>
    <div><svg width="34" height="34" viewBox="-2 -2 34 34"><use href="#chrome" width="30" height="30"/><circle cx="22.500" cy="22" r="9.500" fill="#c9d4c8"/><path d="M15 22q0-8 6-8.500q7 0 7 8z" fill="#1c1c1c"/><ellipse cx="21.500" cy="24" rx="5" ry="7" fill="#c99b83"/><path d="M16.500 21q0-5 5-5t5 5q-5-2-10 0z" fill="#222"/></svg><div class="absolute bottom-0 left-[6px] w-[51px] h-[3px] bg-[#76b9ed]"></div></div>
    <div><svg width="28" height="28"><use href="#word"/></svg><div class="absolute bottom-0 left-[6px] w-[51px] h-[3px] bg-[#76b9ed]"></div></div>
  </div>
  <div class="ml-auto flex items-center h-full">
    <svg width="30" height="21" viewBox="0 0 30 21"><path d="M1 1h25v19H4q-3 0-3-3zM26 5h3v12q0 3-3 3M5 5h17M5 9h7v7H5zM15 9h8M15 12.500h8M15 16h8" fill="none" stroke="#fff" stroke-width="1.700"/></svg>
    <svg class="ml-[37px]" width="16" height="10" viewBox="0 0 16 10"><path d="M.7 9L8 1.500L15.300 9" fill="none" stroke="#fff" stroke-width="1.300"/></svg>
    <svg class="ml-[25px]" width="13" height="21" viewBox="0 0 13 21"><rect x="2.500" width="8" height="14" rx="1" fill="#fff"/><path d="M.7 10v4q0 3 3 3h5.600q3 0 3-3v-4M6.500 17v3M3 20h7" fill="none" stroke="#fff" stroke-width="1.200"/></svg>
    <svg class="ml-[27px]" width="17" height="17" viewBox="0 0 17 17"><path d="M1 16Q1 2 16 1.500M4.500 16Q5 6 16 5M8.500 16Q9 10 16 9M12 16q0-3 3-3" fill="none" stroke="#ddd" stroke-width="1.200"/><circle cx="14" cy="15" r="1.500" fill="#fff"/></svg>
    <svg class="ml-[21px]" width="20" height="18" viewBox="0 0 20 18"><path d="M.6 6h3L7.500 2v13.500L3.600 12h-3zM10 7q1.500 2 0 4M12.500 4.500q3.500 4.500 0 9" fill="none" stroke="#fff" stroke-width="1.200"/><path d="M15 1.500q6.500 7.500 0 15" fill="none" stroke="#888" stroke-width="1.200"/></svg>
    <svg class="ml-[20px]" width="20" height="15" viewBox="0 0 20 15"><path d="M2 0v3M5 0v3M.5 3h6v2q0 2-3 2t-3-2zM3.500 7v6" fill="none" stroke="#fff" stroke-width="1.200"/><path d="M8 3.500h10v10H4" fill="none" stroke="#fff"/><path d="M7 5h9.500v7H5.500V8zM18 6h2v5h-2z" fill="#fff"/></svg>
    <span class="ml-[19px] pt-px" data-w="28">ENG</span>
    <div class="ml-[16px] w-[68px] flex flex-col items-center gap-[8px] pt-px"><span data-w="59">10:56 PM</span><span data-w="68">5/20/2025</span></div>
    <svg class="ml-[23px]" width="31" height="34" viewBox="0 0 31 34"><path d="M0 5h20v15h-9v4l-4-4H0z" fill="#fff"/><path d="M3 9h14M3 12.500h14M3 16h9" stroke="#222"/><circle cx="20" cy="25" r="9.800" fill="#2b2b2d" stroke="#888"/><text x="20" y="30" text-anchor="middle" font-size="14" fill="#fff">1</text></svg>
    <div class="ml-[14px] mr-[5px] w-px h-full bg-[#6b6b6e]"></div>
  </div>
</div>

<script>
  // Ruler marks: 120px per inch, a mark every eighth.
  const NS = document.querySelector('svg').namespaceURI;
  function add(svg, tag, attrs, text) {
    const el = document.createElementNS(NS, tag);
    for (const k in attrs) el.setAttribute(k, attrs[k]);
    if (text) el.textContent = text;
    svg.appendChild(el);
    return el;
  }
  const h = document.getElementById('hruler'), v = document.getElementById('vruler');
  for (let i = -9; i <= 56; i++) {
    const x = 608 + i * 15;
    if (i === 0) continue;
    if (i % 8 === 0) add(h, 'text', {x, y: 190, 'font-size': 12.5, 'text-anchor': 'middle', fill: '#555'}, String(Math.abs(i / 8)));
    else add(h, 'path', {d: i % 4 === 0 ? `M${x + .5} 183v6` : `M${x + .5} 185v2`, stroke: '#aaa'});
  }
  for (let i = 4; i <= 56; i++) {
    const y = 150 + i * 15;
    if (i % 8 === 0) add(v, 'text', {transform: `translate(19 ${y + 1}) rotate(-90)`, 'font-size': 12.5, 'text-anchor': 'middle', fill: '#555'}, String(i / 8));
    else add(v, 'path', {d: i % 4 === 0 ? `M12 ${y + .5}h6` : `M14 ${y + .5}h2`, stroke: '#aaa'});
  }
  add(h, 'path', {d: 'M603.500 174.500h10v4l-5 5l-5-5zM608.500 186.500l5 5v4h-10v-4zM603.500 195.500h10v6h-10zM1364.500 186.500l5 5v4h-10v-4z', fill: '#fff', stroke: '#8a8a8a'});

  const labels = [...document.querySelectorAll('[data-w]')];
  function fit() {
    for (const el of labels) el.style.letterSpacing = '0px';
    const widths = labels.map(el => {
      const r = document.createRange();
      r.selectNodeContents(el);
      return r.getBoundingClientRect().width;
    });
    labels.forEach((el, i) => {
      el.style.letterSpacing = (el.dataset.w - widths[i]) / [...el.textContent].length + 'px';
    });
  }
  fit();
  addEventListener('load', fit);
  document.fonts.ready.then(fit);
  for (const ms of [30, 100, 250, 500]) setTimeout(fit, ms);
</script>
</body>
</html>
